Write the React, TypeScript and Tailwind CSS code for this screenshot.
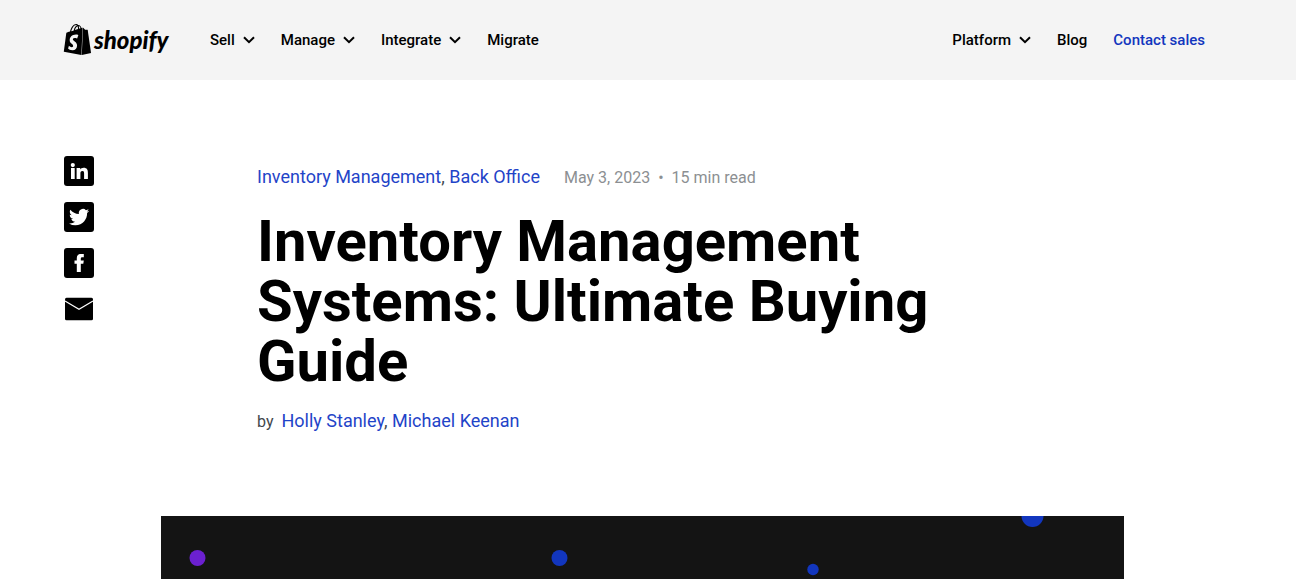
import React from "react";
import { SiShopify } from "react-icons/si";

function Chevron() {
  return (
    <svg width="12" height="8" viewBox="0 0 12 8" fill="none" aria-hidden="true">
      <path d="M1 1.2 6 6.2 11 1.2" stroke="currentColor" strokeWidth="2" />
    </svg>
  );
}

function MenuButton({ label }: { label: string }) {
  return (
    <button type="button" className="flex items-center gap-2">
      {label}
      <Chevron />
    </button>
  );
}

function Header() {
  return (
    <header className="flex h-20 shrink-0 items-center bg-[#f4f4f4] pr-[91px] pl-16 text-[15px] font-medium text-black">
      <a href="#home" aria-label="Shopify home" className="flex items-center gap-1">
        <span className="flex h-8 w-[26px] items-center justify-center pb-0.5">
          <SiShopify className="size-[31px] shrink-0" aria-hidden="true" />
        </span>
        <span className="w-[76px] font-['Lato'] text-2xl leading-8 font-black italic">shopify</span>
      </a>
      <nav aria-label="Main" className="ml-10 flex items-center gap-[26px]">
        <MenuButton label="Sell" />
        <MenuButton label="Manage" />
        <MenuButton label="Integrate" />
        <a href="#migrate">Migrate</a>
      </nav>
      <nav aria-label="Secondary" className="ml-auto flex items-center gap-[26px]">
        <MenuButton label="Platform" />
        <a href="#blog">Blog</a>
        <a href="#contact" className="text-[#1236be]">Contact sales</a>
      </nav>
    </header>
  );
}

const shares = [
  {
    name: "LinkedIn",
    art: (
      <path
        fill="white"
        d="M7 12h3.7v11H7zM8.8 7a2.1 2.1 0 1 1 0 4.2 2.1 2.1 0 0 1 0-4.2zM12.6 12h3.6v1.5c.6-1 1.8-1.8 3.4-1.8 3.5 0 4.3 2.2 4.3 5.2V23h-3.8v-5.4c0-1.3 0-2.7-1.7-2.7s-2 1.1-2 2.6V23h-3.8z"
      />
    ),
  },
  {
    name: "Twitter",
    art: (
      <path
        fill="white"
        transform="translate(5 5) scale(.84)"
        d="M23.953 4.57a10 10 0 0 1-2.825.775 4.958 4.958 0 0 0 2.163-2.723c-.951.555-2.005.959-3.127 1.184a4.92 4.92 0 0 0-8.384 4.482C7.69 8.095 4.067 6.13 1.64 3.162a4.822 4.822 0 0 0-.666 2.475c0 1.71.87 3.213 2.188 4.096a4.904 4.904 0 0 1-2.228-.616v.06a4.923 4.923 0 0 0 3.946 4.827 4.996 4.996 0 0 1-2.212.085 4.936 4.936 0 0 0 4.604 3.417 9.867 9.867 0 0 1-6.102 2.105c-.39 0-.779-.023-1.17-.067a13.995 13.995 0 0 0 7.557 2.209c9.053 0 13.998-7.496 13.998-13.985 0-.21 0-.42-.015-.63A9.935 9.935 0 0 0 24 4.59z"
      />
    ),
  },
  {
    name: "Facebook",
    art: <path fill="white" d="M12.8 24v-8.2h-2.3v-3.4h2.3V10c0-2.7 1.6-4 4.2-4h2.8v3.2h-1.5c-1.2 0-1.5.6-1.5 1.5v1.7h3l-.5 3.4h-2.5V24z" />,
  },
];

function ShareLinks() {
  return (
    <ul className="flex w-[30px] shrink-0 flex-col gap-4">
      {shares.map((s) => (
        <li key={s.name}>
          <a href={"#" + s.name.toLowerCase()} aria-label={"Share on " + s.name}>
            <svg width="30" height="30" viewBox="0 0 30 30" className="block">
              <rect width="30" height="30" rx="3" />
              {s.art}
            </svg>
          </a>
        </li>
      ))}
      <li>
        <a href="#email" aria-label="Share by email">
          <svg width="30" height="30" viewBox="0 0 30 30" className="block">
            <rect x="1" y="3.7" width="28" height="22.6" rx="1.5" />
            <path d="M1 7 15 15.2 29 7" fill="none" stroke="white" strokeWidth="1.2" />
          </svg>
        </a>
      </li>
    </ul>
  );
}

function ArticleHeader() {
  return (
    <article className="max-w-[770px] flex-1 pt-[7px]">
      <div className="flex items-baseline gap-6 leading-7">
        <p className="text-lg">
          <a href="#inventory" className="text-[#1f44c8]">Inventory Management</a>,{" "}
          <a href="#back-office" className="text-[#1f44c8]">Back Office</a>
        </p>
        <p className="flex gap-2 text-base text-[#8c8f92]">
          <time dateTime="2023-05-03">May 3, 2023</time>
          <span>•</span>
          <span>15 min read</span>
        </p>
      </div>
      <h1 className="mt-5 text-[58px] leading-[60px] font-bold text-black">
        Inventory Management Systems: Ultimate Buying Guide
      </h1>
      <p className="mt-4 flex items-baseline gap-2 text-lg leading-7">
        <span className="text-base text-[#42474c]">by</span>
        <span>
          <a href="#holly" className="text-[#1f44c8]">Holly Stanley</a>,{" "}
          <a href="#michael" className="text-[#1f44c8]">Michael Keenan</a>
        </span>
      </p>
    </article>
  );
}

function HeroArt() {
  return (
    <div className="mr-[172px] ml-[161px] min-h-0 flex-1 overflow-hidden bg-[#141414]">
      <svg viewBox="0 0 963 63" className="block w-full" role="img" aria-label="Abstract dots">
        <circle cx="36.5" cy="42" r="8" fill="#6b20d0" />
        <circle cx="398.5" cy="42" r="8" fill="#1236be" />
        <circle cx="652" cy="53.5" r="5.7" fill="#1236be" />
        <circle cx="871.5" cy="0" r="11" fill="#1236be" />
      </svg>
    </div>
  );
}

export default function App() {
  return (
    <div className="flex h-screen flex-col overflow-hidden bg-white font-['Roboto','Liberation_Sans',sans-serif] text-[#42474c]">
      <Header />
      <main className="flex min-h-0 flex-1 flex-col">
        <div className="flex gap-[163px] px-16 pt-19 pb-[81px]">
          <ShareLinks />
          <ArticleHeader />
        </div>
        <HeroArt />
      </main>
    </div>
  );
}
